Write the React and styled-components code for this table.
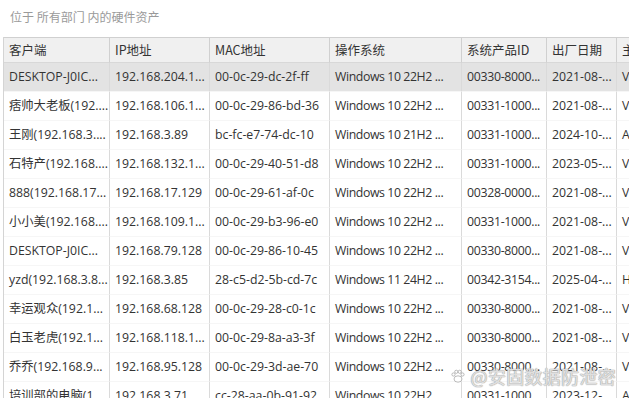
import React from "react"
import styled, { createGlobalStyle } from "styled-components"

const GlobalStyle = createGlobalStyle`
  html, body {
    margin: 0;
    padding: 0;
    background: #fff;
  }
  body {
    font-family: "Open Sans", "Noto Sans CJK SC", sans-serif;
    width: 629px;
    height: 398px;
    overflow: hidden;
  }
`;

const Page = styled.div`
  position: relative;
  width: 629px;
  height: 398px;
  overflow: hidden;
  background: #fff;
`;

const Caption = styled.div`
  padding: 8px 0 0 10px;
  height: 37px;
  box-sizing: border-box;
  font-size: 12px;
  color: #9a9a9a;
  font-family: "Noto Sans CJK SC", sans-serif;
  line-height: 18px;
`;

const Grid = styled.div`
  margin-left: 3px;
  border-left: 1px solid #d4d4d4;
  display: grid;
  grid-template-columns: 106px 100px 120px 132px 85px 70px 120px;
  width: max-content;
`;

const HeadCell = styled.div`
  height: 24px;
  line-height: 24px;
  background: #f0f0f0;
  border-top: 1px solid #d0d0d0;
  border-bottom: 1px solid #d8d8d8;
  border-right: 1px solid #d0d0d0;
  padding-left: 5px;
  font-size: 12.5px;
  color: #333;
  white-space: nowrap;
  overflow: hidden;
  font-family: "Noto Sans CJK SC", sans-serif;
`;

const Cell = styled.div`
  height: 28px;
  line-height: 28px;
  background: ${p => (p.$selected ? "#e3e3e3" : "#fff")};
  border-bottom: 1px solid #f6f6f6;
  border-right: 1px solid #dadada;
  padding-left: 5px;
  font-size: 12.3px;
  letter-spacing: ${p => p.$tight || 0}px;
  color: #333;
  white-space: nowrap;
  overflow: hidden;
  font-family: "Open Sans", "Noto Sans CJK SC", sans-serif;
`;

const Watermark = styled.div`
  position: absolute;
  right: 13px;
  bottom: 9px;
  display: flex;
  align-items: center;
  gap: 5px;
  font-size: 18px;
  font-family: "Noto Sans CJK SC", sans-serif;
  color: rgba(255, 255, 255, 0.65);
  text-shadow: 0 0 1px #aaa, 0 0 1px #aaa, 0 0 1px #aaa;
  letter-spacing: 0.3px;
`;

const headers = ["客户端", "IP地址", "MAC地址", "操作系统", "系统产品ID", "出厂日期", "主"];

// per-column tracking so the truncated values keep their dots inside the cell
const tracking = [0, 0, 0, -0.4, -0.3, 0, 0];

const rows = [
  ["DESKTOP-J0IC...", "192.168.204.1...", "00-0c-29-dc-2f-ff", "Windows 10 22H2 ...", "00330-8000...", "2021-08-...", "V"],
  ["痞帅大老板(192....", "192.168.106.1...", "00-0c-29-86-bd-36", "Windows 10 22H2 ...", "00331-1000...", "2021-08-...", "V"],
  ["王刚(192.168.3....", "192.168.3.89", "bc-fc-e7-74-dc-10", "Windows 10 21H2 ...", "00331-1000...", "2024-10-...", "A"],
  ["石特产(192.168....", "192.168.132.1...", "00-0c-29-40-51-d8", "Windows 10 22H2 ...", "00331-1000...", "2023-05-...", "V"],
  ["888(192.168.17...", "192.168.17.129", "00-0c-29-61-af-0c", "Windows 10 22H2 ...", "00328-0000...", "2021-08-...", "V"],
  ["小小美(192.168....", "192.168.109.1...", "00-0c-29-b3-96-e0", "Windows 10 22H2 ...", "00331-1000...", "2021-08-...", "V"],
  ["DESKTOP-J0IC...", "192.168.79.128", "00-0c-29-86-10-45", "Windows 10 22H2 ...", "00330-8000...", "2021-08-...", "V"],
  ["yzd(192.168.3.8...", "192.168.3.85", "28-c5-d2-5b-cd-7c", "Windows 11 24H2 ...", "00342-3154...", "2025-04-...", "H"],
  ["幸运观众(192.1...", "192.168.68.128", "00-0c-29-28-c0-1c", "Windows 10 22H2 ...", "00330-8000...", "2021-08-...", "V"],
  ["白玉老虎(192.1...", "192.168.118.1...", "00-0c-29-8a-a3-3f", "Windows 10 22H2 ...", "00330-8000...", "2021-08-...", "V"],
  ["乔乔(192.168.9...", "192.168.95.128", "00-0c-29-3d-ae-70", "Windows 10 22H2 ...", "00330-8000...", "2021-08-...", "V"],
  ["培训部的电脑(1...", "192.168.3.71", "cc-28-aa-0b-91-92", "Windows 10 22H2 ...", "00331-1000...", "2023-12-...", "A"],
];

const PawIcon = () => (
  <svg width="16" height="16" viewBox="0 0 16 16" fill="rgba(255,255,255,0.7)" stroke="#aaa" strokeWidth="0.8">
    <ellipse cx="8" cy="11" rx="4" ry="3.2" />
    <circle cx="3.5" cy="6.5" r="1.6" />
    <circle cx="6.3" cy="3.8" r="1.6" />
    <circle cx="9.7" cy="3.8" r="1.6" />
    <circle cx="12.5" cy="6.5" r="1.6" />
  </svg>
);

export default function App() {
  return (
    <Page>
      <GlobalStyle />
      <Caption>位于 所有部门 内的硬件资产</Caption>
      <Grid>
        {headers.map(h => (
          <HeadCell key={h}>{h}</HeadCell>
        ))}
        {rows.map((r, i) =>
          r.map((c, j) => (
            <Cell key={i + "-" + j} $selected={i === 0} $tight={tracking[j]}>{c}</Cell>
          ))
        )}
      </Grid>
      <Watermark>
        <PawIcon />
        <span>@安固数据防泄密</span>
      </Watermark>
    </Page>
  );
}
